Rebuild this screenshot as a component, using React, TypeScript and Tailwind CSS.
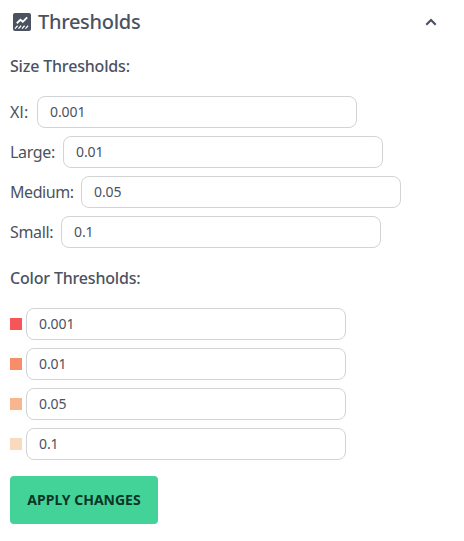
const sizes = [
  { label: 'Xl:', value: '0.001', width: 'w-[27px]', track: 'tracking-[0.2px]' },
  { label: 'Large:', value: '0.01', width: 'w-[53px]', track: 'tracking-[-0.35px]' },
  { label: 'Medium:', value: '0.05', width: 'w-[71px]', track: 'tracking-[-0.45px]' },
  { label: 'Small:', value: '0.1', width: 'w-[51px]', track: 'tracking-[-0.35px]' },
];

const colors = [
  { color: 'bg-[#f75659]', value: '0.001' },
  { color: 'bg-[#f78e69]', value: '0.01' },
  { color: 'bg-[#f9b68e]', value: '0.05' },
  { color: 'bg-[#fadabf]', value: '0.1' },
];

function Field({ value }: { value: string }) {
  return (
    <input
      defaultValue={value}
      className="h-8 w-80 shrink-0 rounded-lg border border-[#d2d3d6] bg-white px-3 pb-[2px] text-sm tracking-[-0.1px] text-[#4b5261] outline-none"
    />
  );
}

export default function App() {
  return (
    <div className="h-[541px] w-[464px] bg-white pl-[10px] font-['Noto_Sans',sans-serif] text-[#4b5261]">
      <header className="flex h-11 items-center pr-[27px]">
        <svg className="ml-[3px] h-[18px] w-[18px]" viewBox="0 0 18 18" fill="none">
          <rect width="18" height="18" rx="2" fill="#4b5261" />
          <path d="M3.8 10.2 7.4 6.8l2.4 2L14.2 4.4" stroke="white" strokeWidth="1.9" />
          <path d="m2 15.6 2.6-2.8m.9 2.8 2.6-2.8m.9 2.8 2.6-2.8m.9 2.8 2.6-2.8" stroke="white" strokeWidth="1.3" />
        </svg>
        <h1 className="ml-[7px] text-xl font-medium tracking-[-0.3px]">Thresholds</h1>
        <svg className="ml-auto h-3 w-3" viewBox="0 0 12 12" fill="none">
          <path d="M1.3 8.7 6 4l4.7 4.7" stroke="currentColor" strokeWidth="2.2" />
        </svg>
      </header>
      <h2 className="mt-[10px] h-6 text-base leading-6 font-medium tracking-[-0.18px]">Size Thresholds:</h2>
      <div className="mt-[18px] flex flex-col gap-2">
        {sizes.map((s) => (
          <label key={s.label} className="flex h-8 items-center">
            <span className={`shrink-0 whitespace-nowrap text-base ${s.width} ${s.track}`}>{s.label}</span>
            <Field value={s.value} />
          </label>
        ))}
      </div>
      <h2 className="mt-[18px] h-6 text-base leading-6 font-medium tracking-[-0.18px]">Color Thresholds:</h2>
      <div className="mt-[18px] flex flex-col gap-2">
        {colors.map((c) => (
          <div key={c.value} className="flex h-8 items-center gap-1">
            <span className={`h-3 w-3 ${c.color}`} />
            <Field value={c.value} />
          </div>
        ))}
      </div>
      <button className="mt-4 h-12 w-[148px] rounded-[4px] bg-[#43d399] text-sm font-bold whitespace-nowrap tracking-[0px] text-[#0d3626]">
        APPLY CHANGES
      </button>
    </div>
  );
}
